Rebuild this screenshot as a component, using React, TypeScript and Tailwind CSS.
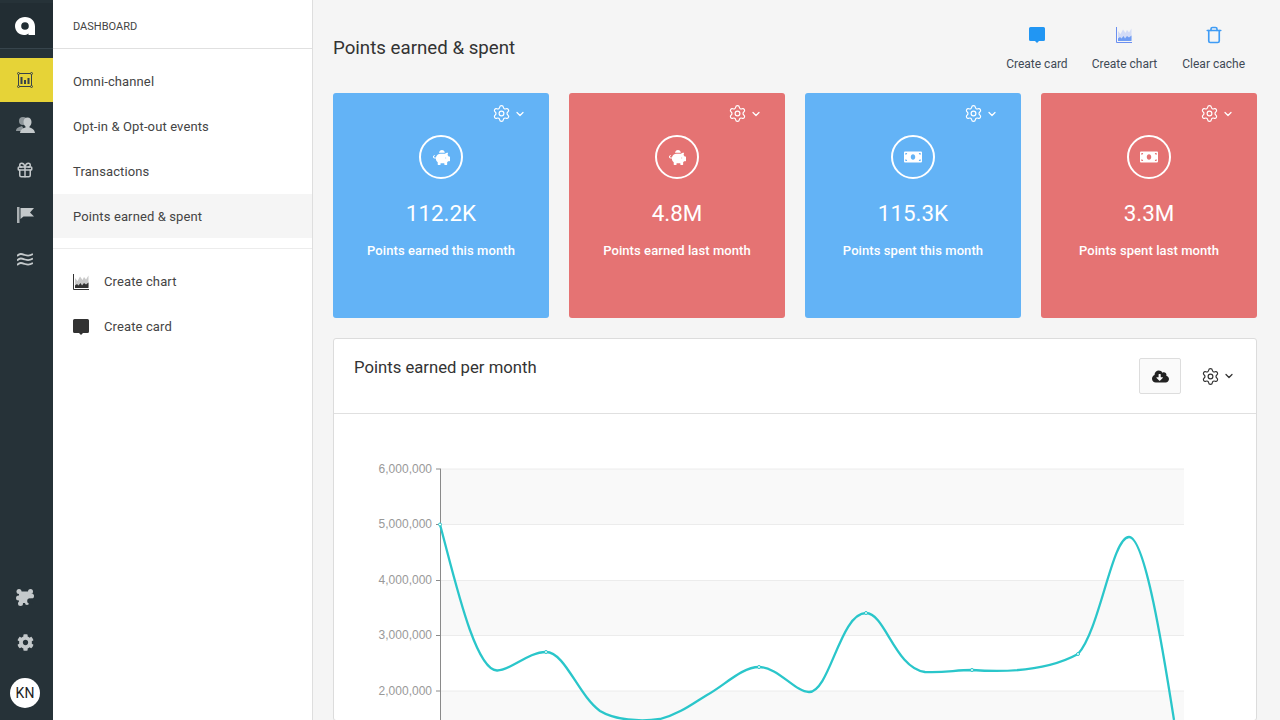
import { ChevronDown, Gift, Settings, Trash } from "lucide-react";
import { FaCloudDownloadAlt, FaPiggyBank, FaMoneyBill, FaCog } from "react-icons/fa";

function ChartGlyph({ line, fill, dark }: { line: string; fill: string; dark: string }) {
  return (
    <svg width="16" height="16" viewBox="0 0 16 16">
      <path d="M.5 0v15.5H16" fill="none" stroke={line} strokeWidth="1" />
      <path d="M2 13V4l2.5 3L7 2.5 9.500 6 11 3l2 2.500L15.500 1.500V13z" fill={fill} />
      <path d="M2 14v-2.500l2-1.500 1.500 1.500L7.500 9 9 11.500l2-2.500 2 1.500 2.500-2V14z" fill={dark} />
    </svg>
  );
}

function CardGlyph({ color }: { color: string }) {
  return (
    <svg width="16" height="16" viewBox="0 0 16 16">
      <path d="M1.500 0h13A1.500 1.500 0 0 1 16 1.500v11a1.500 1.500 0 0 1-1.500 1.500H10l-2 2-2-2H1.500A1.500 1.500 0 0 1 0 12.500v-11A1.500 1.500 0 0 1 1.500 0z" fill={color} />
    </svg>
  );
}

function Logo() {
  return (
    <svg width="20" height="18" viewBox="0 0 20 18">
      <path
        fillRule="evenodd"
        d="M10 0C16 0 20 4 20 9.500V18H13.500V16.500C12 17.600 10.500 18 9 18 4 18 0 14 0 9 0 4 4.500 0 10 0ZM10 5.200A3.800 3.800 0 1 0 10 12.800 3.800 3.800 0 1 0 10 5.200Z"
        fill="#fff"
      />
    </svg>
  );
}

function BoardIcon() {
  return (
    <svg width="16" height="16" viewBox="0 0 16 16" fill="none" stroke="#37424a">
      <rect x="1.500" y="1.500" width="13" height="13" />
      <rect x=".5" y=".5" width="2" height="2" rx="1" fill="#e6d337" />
      <rect x="13.500" y=".5" width="2" height="2" rx="1" fill="#e6d337" />
      <rect x=".5" y="13.500" width="2" height="2" rx="1" fill="#e6d337" />
      <rect x="13.500" y="13.500" width="2" height="2" rx="1" fill="#e6d337" />
      <path d="M4.500 5v7M8 8v4M11.500 6v6" strokeWidth="2" />
    </svg>
  );
}

function PeopleIcon() {
  return (
    <svg width="19" height="18" viewBox="0 0 19 18">
      <circle cx="7" cy="5" r="4" fill="#8d9599" />
      <path d="M0 15c0-3 3-4 6-5l3 5z" fill="#8d9599" />
      <path d="M11.500 1.500c2.500 0 4 2 4 4.500 0 2-1 3.500-2 4.500v1c2 .7 5 1.500 5.500 5.500H4c.5-4 3.500-4.800 5.500-5.500v-1c-1-1-2-2.500-2-4.500 0-2.500 1.500-4.500 4-4.500z" fill="#c4c9cb" />
    </svg>
  );
}

function FlagIcon() {
  return (
    <svg width="17" height="16" viewBox="0 0 17 16">
      <rect x="0" y="0" width="2.500" height="16" fill="#aab0b3" />
      <path d="M3.500 1H17l-4 4.500 4 4H6.500L3.500 12z" fill="#c4c9cb" />
    </svg>
  );
}

function WavesIcon() {
  return (
    <svg width="16" height="14" viewBox="0 0 16 14" fill="none" stroke="#c4c9cb" strokeWidth="1.800">
      <path d="M0 3c3-3 5-2 8-1s5 1 8-1" />
      <path d="M0 7.500c3-3 5-2 8-1s5 1 8-1" />
      <path d="M0 12c3-3 5-2 8-1s5 1 8-1" />
    </svg>
  );
}

function PuzzleIcon() {
  return (
    <svg width="18" height="17" viewBox="0 0 18 17">
      <rect x="3" y="2.500" width="12" height="11.500" fill="#c4c9cb" />
      <circle cx="3" cy="2.500" r="2.500" fill="#c4c9cb" />
      <circle cx="14.500" cy="2.500" r="2.500" fill="#c4c9cb" />
      <circle cx="2.500" cy="9" r="2.500" fill="#c4c9cb" />
      <circle cx="15.500" cy="7" r="2.500" fill="#c4c9cb" />
      <circle cx="4.500" cy="14.500" r="2.500" fill="#c4c9cb" />
      <circle cx="11" cy="14" r="2" fill="#c4c9cb" />
      <circle cx="14" cy="12" r="2.800" fill="#263238" />
    </svg>
  );
}

function GearMenu({ tone }: { tone: string }) {
  return (
    <div className={`flex items-center gap-[3px] ${tone}`}>
      <Settings size={19} strokeWidth={1.5} />
      <ChevronDown size={12} strokeWidth={2.5} />
    </div>
  );
}

const stats = [
  { value: "112.2K", label: "Points earned this month", color: "bg-[#63b3f6]", icon: "pig" },
  { value: "4.8M", label: "Points earned last month", color: "bg-[#e57373]", icon: "pig" },
  { value: "115.3K", label: "Points spent this month", color: "bg-[#63b3f6]", icon: "money" },
  { value: "3.3M", label: "Points spent last month", color: "bg-[#e57373]", icon: "money" },
];

const menu = ["Omni-channel", "Opt-in & Opt-out events", "Transactions", "Points earned & spent"];

const ticks = [
  { y: 469, label: "6,000,000" },
  { y: 524.5, label: "5,000,000" },
  { y: 580.5, label: "4,000,000" },
  { y: 635.5, label: "3,000,000" },
  { y: 691, label: "2,000,000" },
];

const points: [number, number][] = [
  [440, 524.5],
  [546, 652],
  [759, 667],
  [866, 613],
  [972, 670],
  [1078, 654],
];

function LineChart() {
  return (
    <svg width="922" height="306" viewBox="334 414 922 306" className="block">
      <rect x="441" y="469" width="743" height="55.5" fill="#f9f9f9" />
      <rect x="441" y="580.5" width="743" height="55" fill="#f9f9f9" />
      <rect x="441" y="691" width="743" height="29" fill="#f9f9f9" />
      {ticks.map((t) => (
        <g key={t.y}>
          <path d={`M441 ${t.y}H1184`} stroke="#ececec" strokeWidth="1" />
          <path d={`M436 ${t.y}H441`} stroke="#8a8a8a" strokeWidth="1" />
          <text x="432" y={t.y + 3.5} textAnchor="end" fontSize="12" fill="#999" fontFamily="Liberation Sans, sans-serif">
            {t.label}
          </text>
        </g>
      ))}
      <path d="M440.5 469V720" stroke="#8a8a8a" strokeWidth="1" />
      <path
        d="M440 524.5C455 580 475 670 497 670.5C510 671 528 652 546 652C565 652 578 695 600 711C615 720 640 722 660 719C680 714 695 702 707 695C725 685 742 667 759 667C778 667 795 692 809 692C830 692 840 613 866 613C885 613 895 668 925 672C945 673 955 670 972 670C1000 672 1045 672 1078 654C1100 630 1112 537 1129 537C1145 537 1163 650 1174 720"
        fill="none"
        stroke="#2ac6ca"
        strokeWidth="2.3"
      />
      {points.map(([x, y]) => (
        <circle key={x} cx={x} cy={y} r="1.5" fill="#fff" stroke="#2ac6ca" strokeWidth="1" />
      ))}
    </svg>
  );
}

export default function App() {
  return (
    <div className="flex h-[720px] w-[1280px] overflow-hidden bg-[#f5f5f5] font-['Roboto',sans-serif] text-[#333]">
      <aside className="flex w-[53px] shrink-0 flex-col bg-[#263238]">
        <div className="flex h-[49px] items-center justify-center border-t-[3px] border-b border-t-[#263238] border-b-[#37444c] bg-[#222d33] pr-[3px]">
          <Logo />
        </div>
        <div className="mt-[9px] flex h-[44px] items-center justify-center bg-[#e6d337] pr-[3px]">
          <BoardIcon />
        </div>
        <div className="flex h-[45px] items-center justify-center pr-[3px]"><PeopleIcon /></div>
        <div className="flex h-[45px] items-center justify-center pr-[3px] text-[#c4c9cb]"><Gift size={18} strokeWidth={2} /></div>
        <div className="flex h-[45px] items-center justify-center pr-[3px]"><FlagIcon /></div>
        <div className="flex h-[45px] items-center justify-center pr-[3px]"><WavesIcon /></div>
        <div className="mt-auto flex h-[45px] items-center justify-center pr-[3px]"><PuzzleIcon /></div>
        <div className="flex h-[45px] items-center justify-center pr-[3px] text-[#c4c9cb]"><FaCog size={17} /></div>
        <div className="mt-[13px] mb-[12px] ml-[10px] flex h-[30px] w-[30px] items-center justify-center rounded-full bg-white text-[14px] text-[#222]">KN</div>
      </aside>

      <nav className="w-[260px] shrink-0 border-r border-[#dedede] bg-white">
        <div className="flex h-[49px] items-center border-b border-[#e0e0e0] px-5 pt-[7px] text-[11px] text-[#444]">DASHBOARD</div>
        <ul className="mt-[10px] border-b border-[#ececec] pb-[10px]">
          {menu.map((m) => (
            <li
              key={m}
              className={
                m === "Points earned & spent"
                  ? "flex h-[44px] items-center bg-[#f5f5f5] px-5 pt-px text-[13px] tracking-[0.12px] text-[#444]"
                  : "flex h-[45px] items-center px-5 text-[13px] tracking-[0.12px] text-[#444]"
              }
            >
              {m}
            </li>
          ))}
        </ul>
        <div className="mt-[10px]">
          <div className="flex h-[45px] items-center gap-[15px] px-5 text-[13px] tracking-[0.12px] text-[#444]">
            <ChartGlyph line="#333" fill="#c9c9c9" dark="#333" />
            Create chart
          </div>
          <div className="flex h-[45px] items-center gap-[15px] px-5 text-[13px] tracking-[0.12px] text-[#444]">
            <CardGlyph color="#333" />
            Create card
          </div>
        </div>
      </nav>

      <main className="min-w-0 flex-1 pr-[23px] pl-5">
        <header className="flex h-[93px] items-start justify-between">
          <h1 className="mt-[36px] text-[18.7px] leading-[24px] text-[#333]">Points earned &amp; spent</h1>
          <div className="mt-[26px] mr-[12px] flex gap-[24px] text-[12px] text-[#3f4a55]">
            <div className="flex flex-col items-center gap-[11px]">
              <div className="flex h-[18px] items-center"><CardGlyph color="#2196f3" /></div>
              Create card
            </div>
            <div className="flex flex-col items-center gap-[11px]">
              <div className="flex h-[18px] items-center"><ChartGlyph line="#6b8ff0" fill="#d3dcf7" dark="#6f9cf3" /></div>
              Create chart
            </div>
            <div className="ml-px flex flex-col items-center gap-[11px]">
              <div className="flex h-[18px] items-center text-[#3f9cf5]"><Trash size={18} strokeWidth={2.2} /></div>
              Clear cache
            </div>
          </div>
        </header>

        <section className="grid grid-cols-4 gap-5">
          {stats.map((s) => (
            <div key={s.label} className={`flex h-[225px] flex-col items-center rounded-[3px] text-white ${s.color}`}>
              <div className="mt-[11px] flex w-full justify-end pr-[23px]">
                <GearMenu tone="text-white" />
              </div>
              <div className="mt-[12px] flex h-[44px] w-[44px] items-center justify-center rounded-full border-2 border-white">
                {s.icon === "pig" ? <FaPiggyBank size={17} /> : <FaMoneyBill size={18} />}
              </div>
              <div className="mt-[18px] text-[22.4px] leading-[32px]">{s.value}</div>
              <div className="mt-[12px] text-[13px] font-medium tracking-[0.08px] leading-[20px]">{s.label}</div>
            </div>
          ))}
        </section>

        <section className="mt-5 rounded-[3px] border border-[#dcdcdc] bg-white">
          <div className="flex h-[75px] items-start justify-between border-b border-[#e0e0e0] pr-[21px] pl-5">
            <h2 className="mt-[17px] text-[16.7px] leading-[24px] text-[#333]">Points earned per month</h2>
            <div className="mt-[19px] flex items-center gap-[20px]">
              <button className="flex h-[36px] w-[42px] items-center justify-center rounded-[2px] border border-[#ddd] bg-[#fafafa] text-[#222]">
                <FaCloudDownloadAlt size={17} />
              </button>
              <GearMenu tone="text-[#333]" />
            </div>
          </div>
          <LineChart />
        </section>
      </main>
    </div>
  );
}
